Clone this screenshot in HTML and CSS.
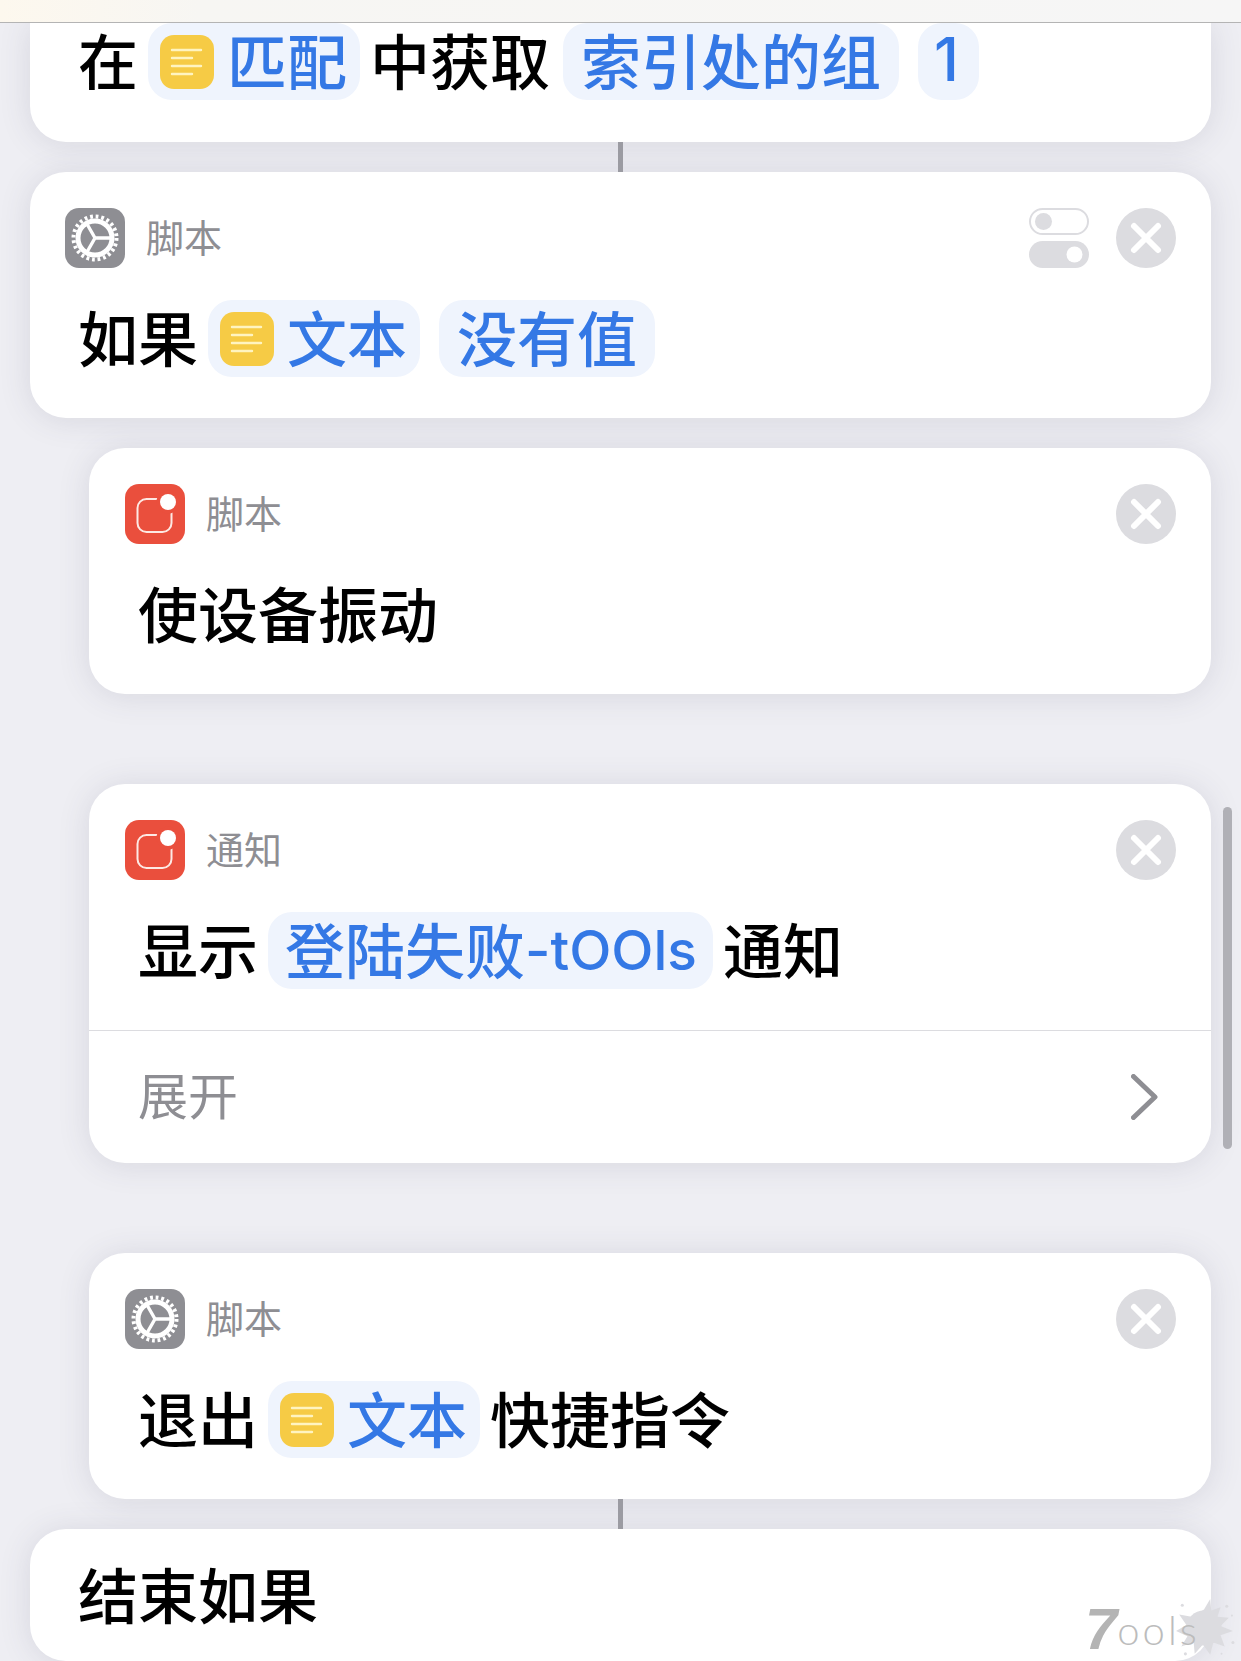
FILE: index.html
```html
<!DOCTYPE html>
<html lang="zh-CN">

<head>
    <meta charset="UTF-8">
    <meta name="viewport" content="width=device-width, initial-scale=1.0">
    <title>快捷指令</title>
    <link rel="stylesheet" href="styles.css">
</head>

<body>
    <svg class="icon-defs" width="0" height="0">
        <symbol id="icon-text" viewBox="0 0 54 54">
            <rect width="54" height="54" rx="14" fill="#f6cb45" />
            <path d="M12 15H41M12 23H32M12 31H41M12 39H32" stroke="#fff4c0" stroke-width="2.4" stroke-linecap="round" />
        </symbol>
        <symbol id="icon-gear" viewBox="0 0 60 60">
            <rect width="60" height="60" rx="14" fill="#8e8e93" />
            <circle cx="30" cy="30" r="21.5" fill="none" stroke="#fff" stroke-width="4" stroke-dasharray="2.81 2.82" />
            <circle cx="30" cy="30" r="17" fill="none" stroke="#fff" stroke-width="5" />
            <path d="M30 30H46M30 30L22 16M30 30L22 44" stroke="#fff" stroke-width="3.4" />
        </symbol>
        <symbol id="icon-notify" viewBox="0 0 60 60">
            <rect width="60" height="60" rx="14" fill="#ea4f3d" />
            <rect x="12.5" y="15" width="34" height="33" rx="9" fill="none" stroke="#fde9e4" stroke-width="2" />
            <circle cx="43" cy="18" r="11.5" fill="#ea4f3d" />
            <circle cx="43" cy="18" r="8" fill="#fff" />
        </symbol>
        <symbol id="icon-close" viewBox="0 0 60 60">
            <circle cx="30" cy="30" r="30" fill="#dcdce0" />
            <path d="M18 18L42 42M42 18L18 42" stroke="#fff" stroke-width="6" stroke-linecap="round" />
        </symbol>
    </svg>

    <div class="top-bar"></div>

    <div class="list">
        <div class="card card-cut">
            <div class="row">
                <span class="plain">在</span>
                <span class="chip chip-var"><svg class="var-icon"><use href="#icon-text" /></svg>匹配</span>
                <span class="plain">中获取</span>
                <span class="chip">索引处的组</span>
                <span class="chip chip-num">1</span>
            </div>
        </div>

        <div class="connector"></div>

        <div class="card">
            <div class="card-main">
                <div class="card-head">
                    <svg class="app-icon"><use href="#icon-gear" /></svg>
                    <span class="app-name">脚本</span>
                    <svg class="toggle-icon" viewBox="0 0 60 60">
                        <rect x="1" y="1" width="58" height="25" rx="12.5" fill="#fff" stroke="#dcdce0" stroke-width="2" />
                        <circle cx="14.5" cy="13.5" r="8.5" fill="#dcdce0" />
                        <rect y="33" width="60" height="27" rx="13.5" fill="#dcdce0" />
                        <circle cx="45.5" cy="46.5" r="8" fill="#fff" />
                    </svg>
                    <svg class="close-icon"><use href="#icon-close" /></svg>
                </div>
                <div class="row">
                    <span class="plain">如果</span>
                    <span class="chip chip-var"><svg class="var-icon"><use href="#icon-text" /></svg>文本</span>
                    <span class="chip">没有值</span>
                </div>
            </div>
        </div>

        <div class="card card-inner">
            <div class="card-main">
                <div class="card-head">
                    <svg class="app-icon"><use href="#icon-notify" /></svg>
                    <span class="app-name">脚本</span>
                    <svg class="close-icon"><use href="#icon-close" /></svg>
                </div>
                <div class="row">
                    <span class="plain">使设备振动</span>
                </div>
            </div>
        </div>

        <div class="card card-inner card-far">
            <div class="card-main">
                <div class="card-head">
                    <svg class="app-icon"><use href="#icon-notify" /></svg>
                    <span class="app-name">通知</span>
                    <svg class="close-icon"><use href="#icon-close" /></svg>
                </div>
                <div class="row">
                    <span class="plain">显示</span>
                    <span class="chip chip-tight">登陆失败<span class="latin">-tOOls</span></span>
                    <span class="plain">通知</span>
                </div>
            </div>
            <div class="card-foot">
                <span class="foot-label">展开</span>
                <svg class="chevron" viewBox="0 0 27 46">
                    <path d="M2.5 2.5L24 23L2.5 43.5" fill="none" stroke="#8e8e93" stroke-width="5" stroke-linecap="round" stroke-linejoin="round" />
                </svg>
            </div>
        </div>

        <div class="card card-inner card-far">
            <div class="card-main">
                <div class="card-head">
                    <svg class="app-icon"><use href="#icon-gear" /></svg>
                    <span class="app-name">脚本</span>
                    <svg class="close-icon"><use href="#icon-close" /></svg>
                </div>
                <div class="row">
                    <span class="plain">退出</span>
                    <span class="chip chip-var"><svg class="var-icon"><use href="#icon-text" /></svg>文本</span>
                    <span class="plain">快捷指令</span>
                </div>
            </div>
        </div>

        <div class="connector"></div>

        <div class="card card-end">
            <div class="row">
                <span class="plain">结束如果</span>
            </div>
        </div>
    </div>

    <div class="scroll-thumb"></div>

    <div class="watermark">
        <svg class="splat" viewBox="0 0 60 60">
            <circle cx="30" cy="30" r="17" fill="#dcdce0" />
            <path d="M30 12L36 2L37 13L46 10L43 19L54 20L46 28L58 33L46 37L50 48L39 44L36 56L29 46L21 55L20 44L8 48L14 38L3 33L13 27L6 17L18 19Z" fill="#dcdce0" />
            <circle cx="9" cy="8" r="1.5" fill="#dcdce0" />
            <circle cx="52" cy="9" r="1.5" fill="#dcdce0" />
            <circle cx="57" cy="18" r="1" fill="#dcdce0" />
            <circle cx="58" cy="44" r="1.5" fill="#dcdce0" />
            <circle cx="47" cy="55" r="1" fill="#dcdce0" />
            <circle cx="12" cy="55" r="1.5" fill="#dcdce0" />
        </svg>
        <span class="mark-seven">7</span><span class="mark-rest">ools</span>
    </div>
</body>

</html>
```

FILE: styles.css
```css
html,
body {
    margin: 0;
    padding: 0;
}

body {
    position: relative;
    height: 1661px;
    overflow: hidden;
    background-color: #eeeef3;
    font-family: Inter, "Noto Sans CJK SC", sans-serif;
    color: #000;
}

.icon-defs {
    position: absolute;
}

.top-bar {
    position: relative;
    z-index: 2;
    height: 23px;
    box-sizing: border-box;
    border-bottom: 1px solid #b4b4b4;
    background: linear-gradient(to right, #fdf8ee 0, #f7f6f3 200px, #f6f6f6 100%);
}

.list {
    display: flex;
    flex-direction: column;
    padding: 0 30px;
}

.card {
    background-color: #fff;
    border-radius: 36px;
    box-shadow: 0 2px 32px rgba(60, 60, 90, 0.13);
    overflow: hidden;
}

.card-cut {
    border-radius: 0 0 36px 36px;
    padding: 0 46px 42px 48px;
}

.card-inner {
    margin-left: 59px;
    margin-top: 30px;
}

.card-far {
    margin-top: 90px;
}

.card-end {
    padding: 28px 46px 27px 48px;
}

.card-main {
    padding: 36px 35px 41px;
}

.card-inner .card-main {
    padding-left: 36px;
}

.card-head {
    display: flex;
    align-items: center;
    gap: 21px;
    height: 60px;
    margin-bottom: 32px;
}

.app-icon {
    width: 60px;
    height: 60px;
}

.app-name {
    padding-bottom: 6px;
    font-size: 38px;
    font-weight: 400;
    color: #8e8e93;
}

.toggle-icon {
    width: 60px;
    height: 60px;
    margin-left: auto;
    margin-right: 6px;
}

.close-icon {
    width: 60px;
    height: 60px;
}

.app-name + .close-icon {
    margin-left: auto;
}

.row {
    display: flex;
    align-items: center;
    gap: 10px;
    height: 77px;
    font-size: 60px;
    font-weight: 500;
    white-space: nowrap;
}

.card-main .row {
    padding-left: 13px;
}

.plain {
    padding-bottom: 6px;
}

.chip {
    display: inline-flex;
    align-items: center;
    box-sizing: border-box;
    height: 77px;
    padding: 0 18px 6px;
    border-radius: 24px;
    background-color: #eff4fd;
    color: #3478e5;
}

.chip + .chip {
    margin-left: 9px;
}

.chip + .plain + .chip {
    margin-left: 3px;
}

.chip-var {
    gap: 13px;
    padding: 0 13px 6px 12px;
}

.chip-num {
    padding: 0 20px 6px 16px;
}

.chip-tight {
    padding: 0 16px 6px 17px;
}

.latin {
    margin-top: 4px;
    font-size: 55px;
}

.var-icon {
    width: 54px;
    height: 54px;
    margin-bottom: -6px;
}

.connector {
    position: relative;
    z-index: 1;
    width: 5px;
    height: 30px;
    align-self: center;
    background-color: #9b9ba2;
}

.card-foot {
    display: flex;
    align-items: center;
    justify-content: space-between;
    height: 133px;
    padding: 0 53px 0 49px;
    border-top: 1px solid #dcdce0;
    box-sizing: border-box;
    font-size: 50px;
    color: #8e8e93;
}

.foot-label {
    padding-bottom: 8px;
}

.chevron {
    width: 27px;
    height: 46px;
}

.scroll-thumb {
    position: absolute;
    left: 1223px;
    top: 807px;
    width: 9px;
    height: 342px;
    border-radius: 5px;
    background-color: #b0b0b6;
}

.watermark {
    position: absolute;
    left: 1085px;
    top: 1595px;
    width: 150px;
    height: 60px;
    display: flex;
    align-items: baseline;
    color: #bcbcbc;
    font-family: Lato, sans-serif;
}

.splat {
    position: absolute;
    left: 88px;
    top: 2px;
    width: 62px;
    height: 62px;
}

.mark-seven {
    position: relative;
    font-family: "Liberation Sans", sans-serif;
    font-size: 58px;
    font-weight: 700;
    font-style: italic;
    color: #b4b4b4;
}

.mark-rest {
    position: relative;
    top: -4px;
    font-size: 40px;
    font-weight: 300;
    letter-spacing: 3px;
}
```
